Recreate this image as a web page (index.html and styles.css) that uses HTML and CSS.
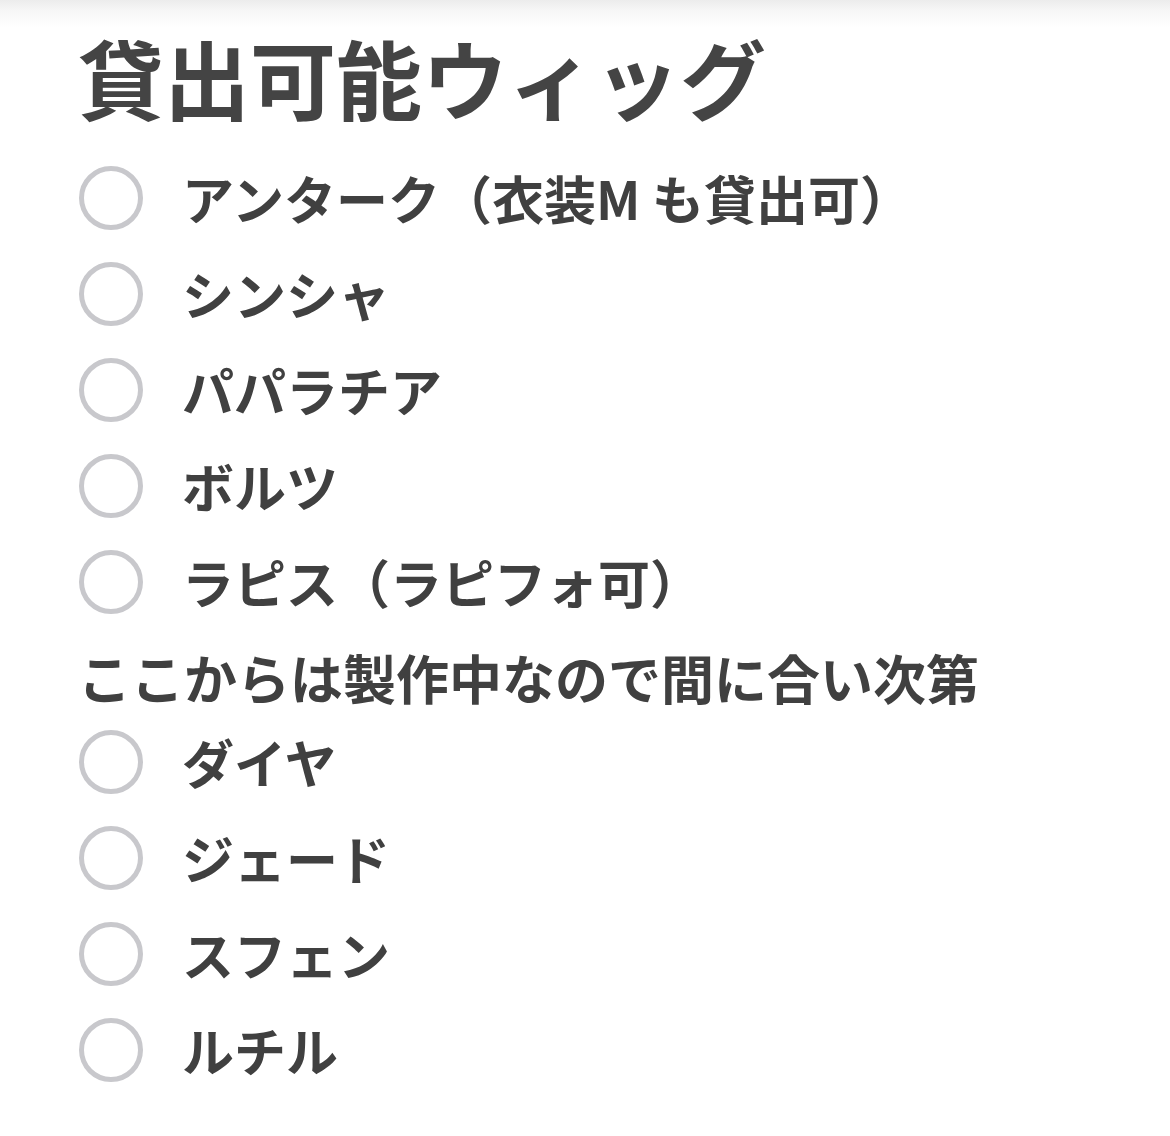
FILE: index.html
```html
<!DOCTYPE html>
<html lang="ja">
<head>
<meta charset="utf-8">
<link rel="stylesheet" href="styles.css">
</head>
<body>
<div class="page">
  <h1 class="title">貸出可能ウィッグ</h1>
  <ul class="options">
    <li class="option"><span class="radio"></span><span class="label">アンターク（衣装M も貸出可）</span></li>
    <li class="option"><span class="radio"></span><span class="label">シンシャ</span></li>
    <li class="option"><span class="radio"></span><span class="label">パパラチア</span></li>
    <li class="option"><span class="radio"></span><span class="label">ボルツ</span></li>
    <li class="option"><span class="radio"></span><span class="label">ラピス（ラピフォ可）</span></li>
  </ul>
  <p class="note">ここからは製作中なので間に合い次第</p>
  <ul class="options">
    <li class="option"><span class="radio"></span><span class="label">ダイヤ</span></li>
    <li class="option"><span class="radio"></span><span class="label">ジェード</span></li>
    <li class="option"><span class="radio"></span><span class="label">スフェン</span></li>
    <li class="option"><span class="radio"></span><span class="label">ルチル</span></li>
  </ul>
</div>
</body>
</html>
```
FILE: styles.css
```css
html, body {
  margin: 0;
  padding: 0;
  background: #fff;
}
body {
  font-family: "Noto Sans CJK JP", "Noto Sans", sans-serif;
  color: #404040;
  width: 1170px;
  height: 1136px;
  overflow: hidden;
  background: linear-gradient(to bottom, #ececec 0px, #f6f6f6 10px, #ffffff 28px);
}
.page {
  padding: 33px 0 0 78px;
}
.title {
  margin: 0;
  font-size: 86px;
  line-height: 88px;
  font-weight: 700;
  color: #444;
  letter-spacing: 0;
}
.options {
  list-style: none;
  margin: 0;
  padding: 0;
}
.options:first-of-type {
  margin-top: 29px;
}
.option {
  display: flex;
  align-items: center;
  height: 96px;
}
.radio {
  box-sizing: border-box;
  width: 64px;
  height: 64px;
  border: 5px solid #c8c8cc;
  border-radius: 50%;
  flex: none;
  margin-left: 1px;
}
.label {
  margin-left: 39px;
  font-size: 52px;
  font-weight: 700;
  line-height: 1;
  color: #404040;
  white-space: pre;
}
.note {
  margin: 0;
  padding-top: 10px;
  height: 74px;
  line-height: 74px;
  font-size: 53px;
  font-weight: 700;
  color: #404040;
}
```
